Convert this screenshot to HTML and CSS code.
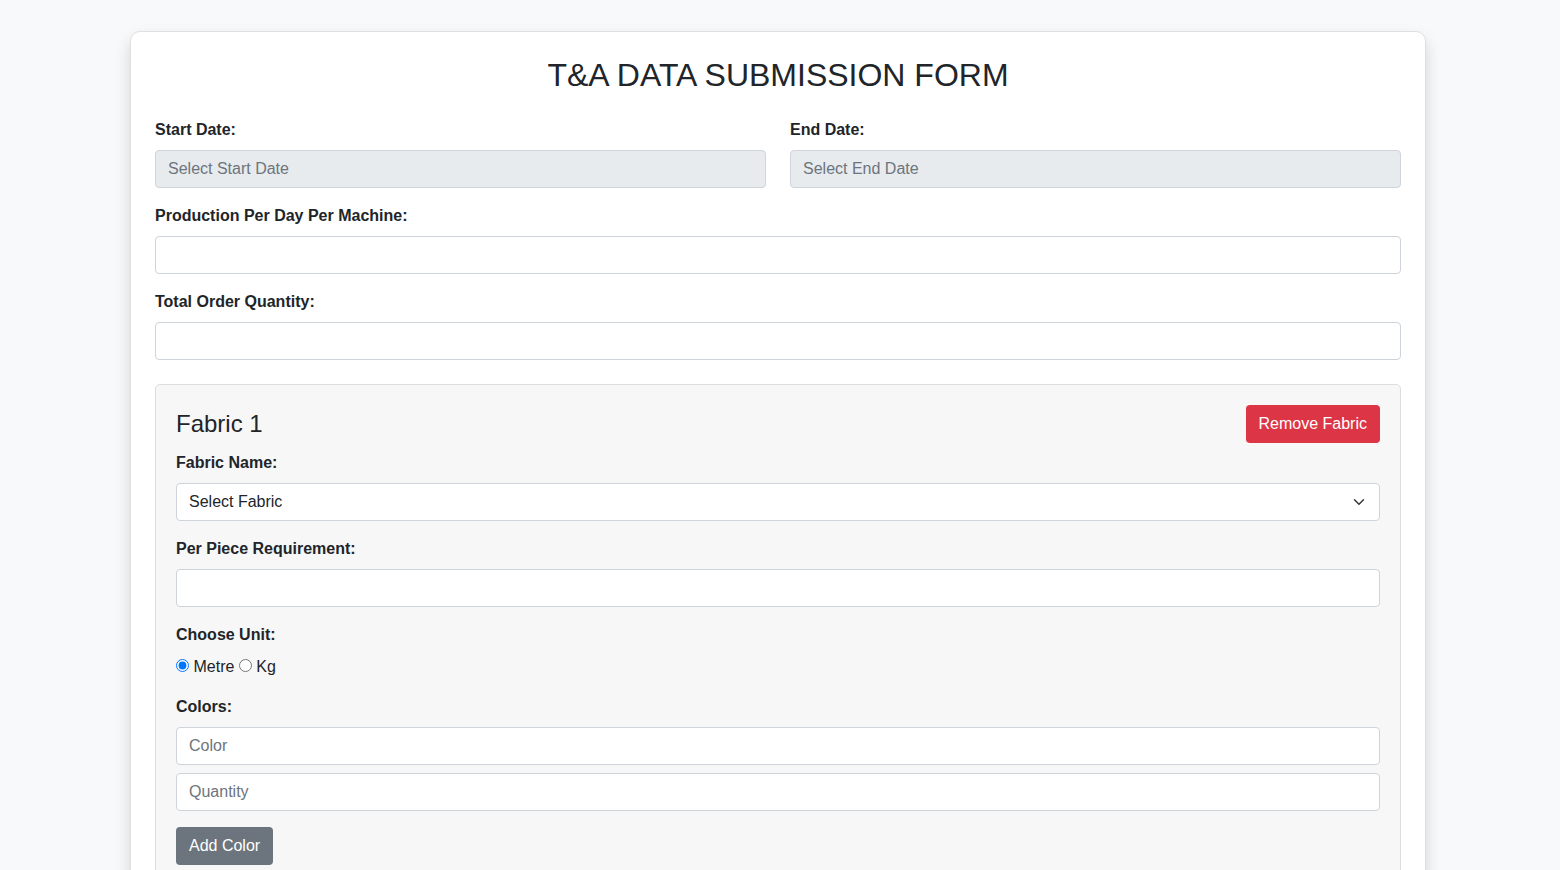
FILE: index.html
```html
<!DOCTYPE html>
<html lang="en">
<head>
<meta charset="utf-8">
<meta name="viewport" content="width=device-width, initial-scale=1">
<title>T&amp;A Data Submission Form</title>
<link rel="stylesheet" href="styles.css">
</head>
<body>
<main class="page">
  <form class="card">
    <h2 class="card-title">T&amp;A DATA SUBMISSION FORM</h2>
    <div class="date-row">
      <div class="field">
        <label class="label" for="start-date">Start Date:</label>
        <input class="control control-readonly" type="text" id="start-date" placeholder="Select Start Date" readonly>
      </div>
      <div class="field">
        <label class="label" for="end-date">End Date:</label>
        <input class="control control-readonly" type="text" id="end-date" placeholder="Select End Date" readonly>
      </div>
    </div>
    <div class="field">
      <label class="label" for="production">Production Per Day Per Machine:</label>
      <input class="control" type="text" id="production">
    </div>
    <div class="field">
      <label class="label" for="total-order">Total Order Quantity:</label>
      <input class="control" type="text" id="total-order">
    </div>

    <section class="fabric">
      <div class="fabric-header">
        <h4 class="fabric-title">Fabric 1</h4>
        <button class="btn btn-danger" type="button">Remove Fabric</button>
      </div>
      <div class="fabric-fields">
        <div class="field">
          <label class="label" for="fabric-name">Fabric Name:</label>
          <select class="control select" id="fabric-name">
            <option>Select Fabric</option>
          </select>
        </div>
        <div class="field">
          <label class="label" for="per-piece">Per Piece Requirement:</label>
          <input class="control" type="text" id="per-piece">
        </div>
        <div class="field" role="radiogroup" aria-labelledby="unit-label">
          <span class="label" id="unit-label">Choose Unit:</span>
          <div>
            <input class="radio" type="radio" name="unit" id="metre" checked>
            <label for="metre">Metre</label>
            <input class="radio" type="radio" name="unit" id="kg">
            <label for="kg">Kg</label>
          </div>
        </div>
        <div class="field">
          <label class="label" for="color">Colors:</label>
          <input class="control" type="text" id="color" placeholder="Color">
          <input class="control" type="text" placeholder="Quantity" aria-label="Quantity">
        </div>
        <button class="btn btn-secondary" type="button">Add Color</button>
      </div>
    </section>
  </form>
</main>
</body>
</html>
```
FILE: styles.css
```css
* {
  box-sizing: border-box;
}

body {
  margin: 0;
  background: #f8f9fa;
  color: #212529;
  font-family: "Liberation Sans", Arial, sans-serif;
  font-size: 16px;
  line-height: 24px;
}

.page {
  padding: 31px 16px 32px 12px;
}

.card {
  display: flex;
  flex-direction: column;
  gap: 16px;
  max-width: 1296px;
  margin: 0 auto;
  padding: 24px;
  background: #fff;
  border: 1px solid #dfe0e1;
  border-radius: 10px;
  box-shadow: 0 8px 16px rgba(0, 0, 0, 0.15);
}

.card-title {
  margin: 0 0 8px;
  font-size: 32px;
  line-height: 38px;
  font-weight: 400;
  text-align: center;
}

.date-row {
  display: grid;
  grid-template-columns: 1fr 1fr;
  gap: 24px;
}

.field {
  display: flex;
  flex-direction: column;
  gap: 8px;
}

.label {
  font-weight: 700;
}

.control {
  width: 100%;
  height: 38px;
  padding: 6px 12px;
  background-color: #fff;
  border: 1px solid #ced4da;
  border-radius: 4px;
  color: #212529;
  font: inherit;
}

.control::placeholder {
  color: #6c757d;
  opacity: 1;
}

.control-readonly {
  background-color: #e8ebee;
}

.select {
  appearance: none;
  padding-right: 36px;
  background-image: url("data:image/svg+xml,%3csvg xmlns='http://www.w3.org/2000/svg' viewBox='0 0 16 16'%3e%3cpath fill='none' stroke='%23343a40' stroke-linecap='round' stroke-linejoin='round' stroke-width='2' d='M2 5l6 6 6-6'/%3e%3c/svg%3e");
  background-repeat: no-repeat;
  background-position: right 12px center;
  background-size: 16px 12px;
}

.fabric {
  margin-top: 8px;
  padding: 20px;
  background: #f7f7f7;
  border: 1px solid #ddd;
  border-radius: 5px;
}

.fabric-header {
  display: flex;
  justify-content: space-between;
  align-items: center;
  margin-bottom: 8px;
}

.fabric-title {
  margin: 0;
  font-size: 24px;
  line-height: 28px;
  font-weight: 400;
}

.fabric-fields {
  display: flex;
  flex-direction: column;
  align-items: stretch;
  gap: 16px;
}

.radio {
  width: 13px;
  height: 13px;
  margin: 0;
}

.btn {
  padding: 6px 12px;
  border: 1px solid transparent;
  border-radius: 4px;
  color: #fff;
  font: inherit;
  cursor: pointer;
}

.btn-danger {
  background: #dc3545;
}

.btn-secondary {
  align-self: flex-start;
  background: #6c757d;
}
```
